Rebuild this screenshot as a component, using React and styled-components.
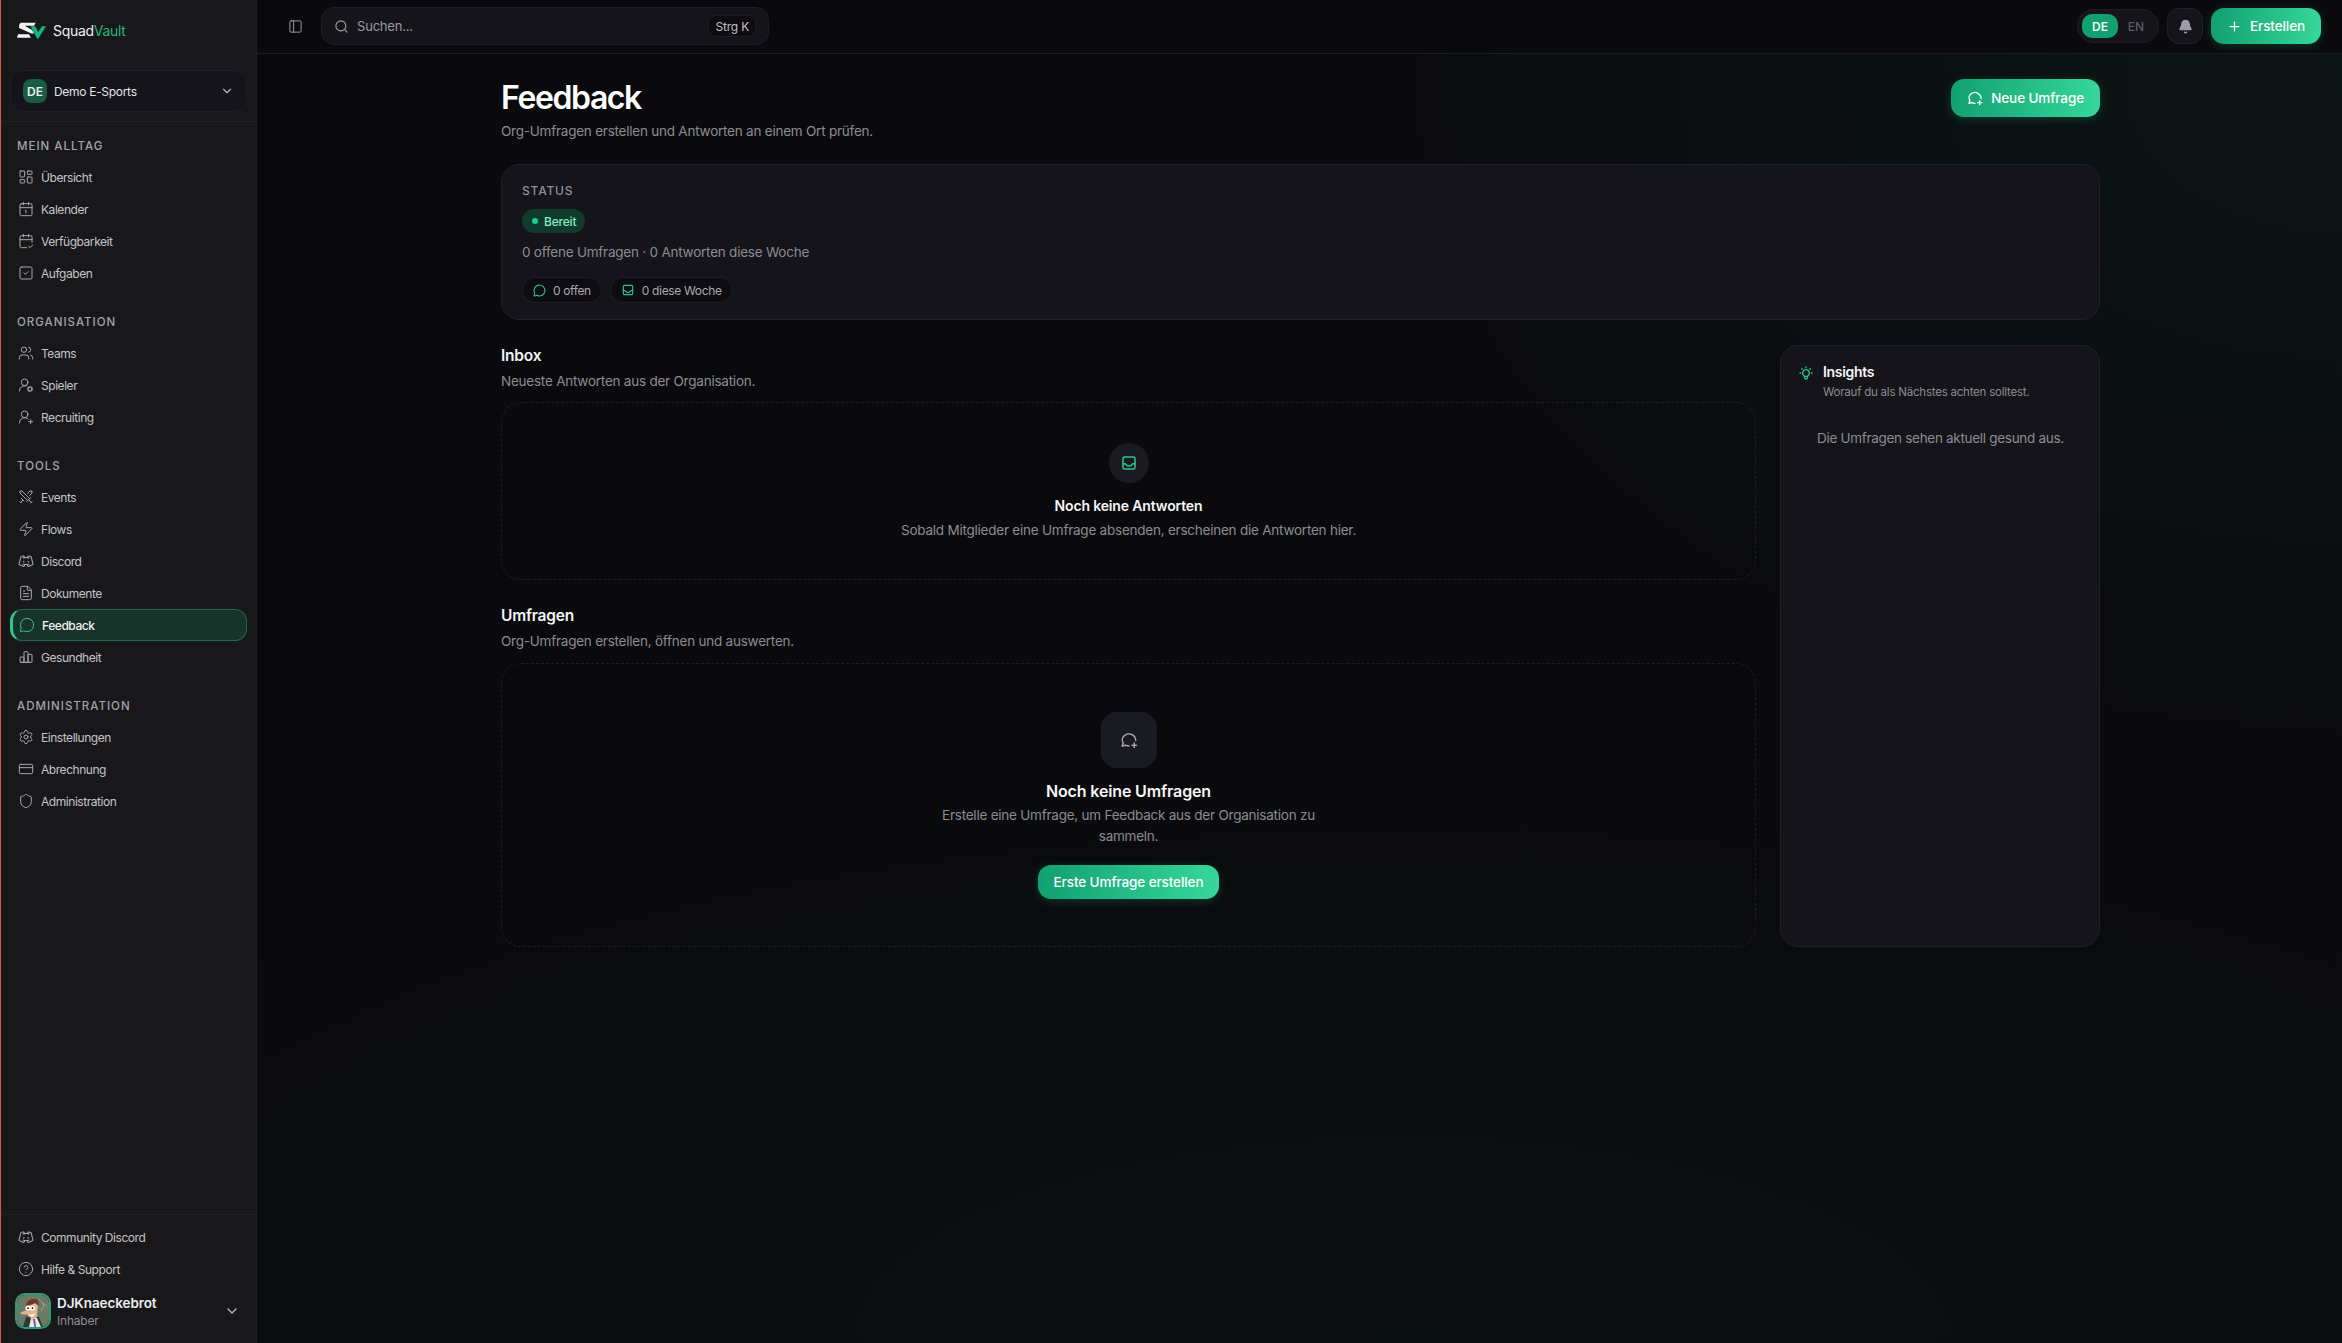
import React from 'react'
import styled, { createGlobalStyle } from 'styled-components'
import {
  LayoutDashboard, Calendar1, CalendarCheck2, SquareCheck, Users, UserRoundCog, UserRoundPlus,
  Swords, Zap, FileText, MessageCircle, Settings, CreditCard, Shield, CircleHelp,
  ChevronDown, PanelLeft, Search, Bell, Plus,
} from 'lucide-react'
import { PiDiscordLogo } from 'react-icons/pi'
import { TbChartBar, TbMessageCirclePlus, TbInbox, TbBulb } from 'react-icons/tb'

const GlobalStyle = createGlobalStyle`
  html, body { margin: 0; padding: 0; background: #0a0a0d; }
  * { box-sizing: border-box; }
  body { font-family: Inter, "Noto Sans", sans-serif; color: #fff; }
`

const Shell = styled.div`
  display: flex;
  height: 1343px;
  overflow: hidden;
`

const Sidebar = styled.aside`
  width: 257px;
  flex: none;
  display: flex;
  flex-direction: column;
  background: #18181a;
  border-left: 1px solid #e0533c;
  border-right: 1px solid #1e1e28;
`

const Brand = styled.div`
  height: 61px;
  display: flex;
  align-items: center;
  gap: 7px;
  padding: 0 0 1px 16px;
`

const BrandName = styled.span`
  font-size: 14px;
  letter-spacing: -0.3px;
  color: #eeeeee;
  em { font-style: normal; color: #22b582; }
`

const OrgWrap = styled.div`
  padding: 9px;
  border-bottom: 1px solid #1f1f29;
`

const OrgSelect = styled.div`
  height: 42px;
  display: flex;
  align-items: center;
  gap: 7px;
  padding: 0 12px;
  background: #14141a;
  border: 1px solid #1e1e28;
  border-radius: 13px;
  color: #e4e4e6;
  svg { margin-left: auto; color: #b8b8bc; }
`

const OrgBadge = styled.div`
  width: 24px;
  height: 24px;
  border-radius: 8px;
  background: #1a5b45;
  display: flex;
  align-items: center;
  justify-content: center;
  font-size: 12px;
  font-weight: 600;
  color: #e8f5ef;
`

const OrgName = styled.span`
  font-size: 12px;
  letter-spacing: -0.3px;
`

const Nav = styled.nav`
  flex: 1;
  display: flex;
  flex-direction: column;
  gap: 25px;
  padding: 16px 9px 0;
`

const NavTitle = styled.div`
  height: 16px;
  line-height: 16px;
  margin-bottom: 7px;
  padding-left: 7px;
  font-size: 11.5px;
  font-weight: 500;
  letter-spacing: 1px;
  color: #a3a3a8;
`

const NavRow = styled.div`
  height: 32px;
  display: flex;
  align-items: center;
  gap: 7px;
  padding-left: ${({ $active }) => ($active ? '6px' : '7px')};
  font-size: 12px;
  letter-spacing: -0.45px;
  border-radius: 12px;
  color: ${({ $active }) => ($active ? '#f2f2f2' : '#c4c4c6')};
  background: ${({ $active }) => ($active ? '#17332a' : 'transparent')};
  border: ${({ $active }) => ($active ? '1px solid #1f6b50' : '1px solid transparent')};
  border-left: ${({ $active }) => ($active ? '3px solid #2fc690' : '1px solid transparent')};
  font-weight: ${({ $active }) => ($active ? 500 : 400)};
  svg { flex: none; color: ${({ $active }) => ($active ? '#2fc690' : '#a9a9ad')}; }
`

const SideFooter = styled.div`
  border-top: 1px solid #1f1f29;
  padding: 6px 9px 14px;
`

const Profile = styled.div`
  margin-top: 8px;
  display: flex;
  align-items: center;
  padding: 0 7px 0 5px;
  gap: 6px;
  > svg:last-child { margin-left: auto; color: #b8b8bc; }
`

const ProfileText = styled.div`
  display: flex;
  flex-direction: column;
  gap: 1px;
`

const ProfileName = styled.span`
  font-size: 13.5px;
  line-height: 17px;
  font-weight: 600;
  letter-spacing: -0.1px;
  color: #ececee;
`

const ProfileRole = styled.span`
  font-size: 12px;
  line-height: 15px;
  letter-spacing: -0.2px;
  color: #8d8d92;
`

const AvatarFrame = styled.svg`
  width: 36px;
  height: 36px;
  border-radius: 10px;
  border: 2px solid #2a9d75;
  flex: none;
`

const Main = styled.div`
  flex: 1;
  min-width: 0;
  display: flex;
  flex-direction: column;
  background:
    radial-gradient(ellipse 1000px 700px at 100% 6%, rgba(20, 130, 90, 0.09), transparent 100%),
    radial-gradient(ellipse 1600px 600px at 55% 100%, rgba(20, 120, 90, 0.05), transparent 100%),
    #0a0a0d;
`

const Topbar = styled.header`
  height: 54px;
  flex: none;
  display: flex;
  align-items: center;
  padding: 0 21px 1px 31px;
  background: #0a0a0d;
  border-bottom: 1px solid #1b1c22;
  > svg { color: #a4a4a8; }
`

const SearchBox = styled.div`
  width: 448px;
  height: 38px;
  margin-left: 18px;
  display: flex;
  align-items: center;
  padding: 0 12px;
  gap: 8px;
  background: #14141a;
  border: 1px solid #1e1e27;
  border-radius: 13px;
  font-size: 13px;
  letter-spacing: -0.2px;
  color: #9a9a9e;
  svg { color: #a4a4a8; }
`

const Kbd = styled.kbd`
  margin-left: auto;
  height: 22px;
  padding: 0 6px;
  display: flex;
  align-items: center;
  font-family: inherit;
  font-size: 12px;
  letter-spacing: -0.2px;
  color: #c0c0c2;
  background: #0c0c10;
  border: 1px solid #1c1c24;
  border-radius: 8px;
`

const TopRight = styled.div`
  margin-left: auto;
  display: flex;
  align-items: center;
  gap: 8px;
`

const LangToggle = styled.div`
  width: 82px;
  height: 34px;
  padding: 0 4px;
  display: flex;
  align-items: center;
  background: #14141a;
  border: 1px solid #1e1e27;
  border-radius: 17px;
`

const LangOption = styled.span`
  width: 36px;
  height: 24px;
  display: flex;
  align-items: center;
  justify-content: center;
  border-radius: 10px;
  font-size: 12px;
  font-weight: ${({ $on }) => ($on ? 600 : 500)};
  color: ${({ $on }) => ($on ? '#f2fbf7' : '#5c5c63')};
  background: ${({ $on }) => ($on ? '#12a070' : 'transparent')};
`

const BellButton = styled.div`
  width: 36px;
  height: 36px;
  display: flex;
  align-items: center;
  justify-content: center;
  background: #14141a;
  border: 1px solid #20202a;
  border-radius: 12px;
  color: #9c9cab;
`

const PrimaryButton = styled.button`
  height: ${({ $h }) => $h}px;
  margin-top: ${({ $mt }) => $mt || 0}px;
  padding: 0 ${({ $pad }) => $pad}px;
  display: inline-flex;
  align-items: center;
  gap: 8px;
  border: none;
  border-radius: 13px;
  font-family: inherit;
  font-size: 13.5px;
  font-weight: 500;
  letter-spacing: -0.1px;
  color: #fff;
  background: linear-gradient(90deg, #12a070 0%, #36d79c 100%);
  box-shadow: 0 2px 10px rgba(32, 190, 130, 0.25);
`

const Content = styled.main`
  width: 1599px;
  margin-left: 244px;
  display: flex;
  flex-direction: column;
`

const PageHead = styled.div`
  display: flex;
  justify-content: space-between;
  align-items: flex-start;
  padding-top: 25px;
  height: 110px;
`

const PageTitle = styled.h1`
  margin: 0;
  font-size: 32px;
  line-height: 38px;
  font-weight: 600;
  letter-spacing: -1.4px;
  color: #fff;
`

const Muted = styled.p`
  margin: ${({ $mt }) => $mt || 0}px 0 0;
  font-size: ${({ $size }) => $size || 13.5}px;
  line-height: ${({ $lh }) => $lh || 20}px;
  letter-spacing: ${({ $ls }) => $ls || -0.23}px;
  color: #8c8c90;
`

const StatusCard = styled.section`
  height: 156px;
  padding: 18px 20px;
  background: #14141a;
  border: 1px solid #20202a;
  border-radius: 18px;
`

const Eyebrow = styled.div`
  font-size: 12px;
  line-height: 16px;
  font-weight: 500;
  letter-spacing: 0.8px;
  color: #909095;
`

const ReadyBadge = styled.span`
  margin-top: 10px;
  height: 24px;
  width: 63px;
  display: flex;
  align-items: center;
  gap: 6px;
  padding-left: 10px;
  border-radius: 12px;
  background: #0f3a2c;
  font-size: 12px;
  font-weight: 500;
  letter-spacing: -0.2px;
  color: #86efc4;
`

const Dot = styled.i`
  width: 6px;
  height: 6px;
  border-radius: 50%;
  background: #12d190;
`

const PillRow = styled.div`
  margin-top: 15px;
  display: flex;
  gap: 8px;
`

const Pill = styled.span`
  height: 26px;
  padding: 0 10px;
  display: inline-flex;
  align-items: center;
  gap: 7px;
  background: #0c0c11;
  border: 1px solid #1d1d27;
  border-radius: 13px;
  font-size: 12px;
  letter-spacing: -0.35px;
  color: #a9a9ae;
  svg { color: #2cc48d; }
`

const Columns = styled.div`
  margin-top: 25px;
  display: grid;
  grid-template-columns: 1fr 320px;
  gap: 24px;
`

const Stack = styled.div`
  display: flex;
  flex-direction: column;
`

const SectionTitle = styled.h2`
  margin: ${({ $mt }) => $mt || 0}px 0 0;
  font-size: 15.5px;
  line-height: 22px;
  font-weight: 600;
  letter-spacing: -0.2px;
  color: #f4f4f5;
`

const EmptyBox = styled.div`
  margin-top: ${({ $gap }) => $gap}px;
  height: ${({ $h }) => $h}px;
  padding-top: ${({ $top }) => $top}px;
  display: flex;
  flex-direction: column;
  align-items: center;
  border: 1px dashed #1e1e25;
  border-radius: 20px;
  text-align: center;
`

const RoundIcon = styled.div`
  width: 40px;
  height: 40px;
  border-radius: 50%;
  display: flex;
  align-items: center;
  justify-content: center;
  background: #1a1a21;
  color: #2cc48d;
`

const SquareIcon = styled.div`
  width: 56px;
  height: 56px;
  border-radius: 16px;
  display: flex;
  align-items: center;
  justify-content: center;
  background: #1a1a22;
  color: #a8a8ac;
`

const EmptyTitle = styled.div`
  margin-top: ${({ $mt }) => $mt}px;
  font-size: ${({ $size }) => $size}px;
  line-height: 20px;
  font-weight: 600;
  letter-spacing: -0.15px;
  color: #f6f6f7;
`

const EmptyText = styled(Muted)`
  max-width: ${({ $max }) => $max}px;
`

const InsightsCard = styled.aside`
  padding: 16px 17px;
  background: #14141a;
  border: 1px solid #20202a;
  border-radius: 18px;
`

const InsightsHead = styled.div`
  display: flex;
  gap: 9px;
  svg { color: #2cc48d; flex: none; margin-top: 3px; }
`

const InsightsTitle = styled.div`
  font-size: 14px;
  line-height: 20px;
  font-weight: 600;
  letter-spacing: -0.3px;
  color: #f6f6f7;
`

const InsightsText = styled(Muted)`
  margin-left: 19px;
`

const navGroups = [
  { title: 'MEIN ALLTAG', items: [
    [LayoutDashboard, 'Übersicht'],
    [Calendar1, 'Kalender'],
    [CalendarCheck2, 'Verfügbarkeit'],
    [SquareCheck, 'Aufgaben'],
  ] },
  { title: 'ORGANISATION', items: [
    [Users, 'Teams'],
    [UserRoundCog, 'Spieler'],
    [UserRoundPlus, 'Recruiting'],
  ] },
  { title: 'TOOLS', items: [
    [Swords, 'Events'],
    [Zap, 'Flows'],
    [PiDiscordLogo, 'Discord'],
    [FileText, 'Dokumente'],
    [MessageCircle, 'Feedback', true],
    [TbChartBar, 'Gesundheit'],
  ] },
  { title: 'ADMINISTRATION', items: [
    [Settings, 'Einstellungen'],
    [CreditCard, 'Abrechnung'],
    [Shield, 'Administration'],
  ] },
]

const Logo = () => (
  <svg width="29" height="17" viewBox="0 0 28 16">
    <path fill="#f2f2f2" d="M3.5 0.5H18L16.5 3.5H7.5L14.5 7.5L16.5 11H14L2 5.5V3Z" />
    <path fill="#f2f2f2" d="M1 11.5H11.5L13.5 15H0Z" />
    <path fill="#17b27f" d="M13 4H17.5L20.5 9.5L24 4H28L20.5 16H19.5Z" />
  </svg>
)

const Avatar = () => (
  <AvatarFrame viewBox="0 0 32 32">
    <rect width="32" height="32" fill="#6b7a66" />
    <path d="M22 4l5 6-3 6M26 8l4 3" stroke="#a4b09c" strokeWidth="0.8" fill="none" />
    <path d="M6 32l3-10h13l4 10z" fill="#2b3a33" />
    <path d="M12 32l2-9h6l4 9z" fill="#e8e8e2" />
    <path d="M16 24l1.5 8h1.5l-1-8z" fill="#6b4aa0" />
    <path d="M10 9c3-4 9-3 11 1l-1 12c-3 3-7 2-9-2z" fill="#e2b48c" />
    <path d="M3 18c3-2 6-3 10-3l1 3c-3 2-8 2-11 0z" fill="#e2b48c" />
    <path d="M9 11c0-5 6-9 12-6l1 6-4-3c-3 2-6 2-9 3z" fill="#6d3a20" />
    <circle cx="11" cy="13" r="2.6" fill="#fff" />
    <circle cx="15.5" cy="13" r="2.6" fill="#fff" />
    <circle cx="11" cy="13.2" r="0.9" fill="#111" />
    <circle cx="15.5" cy="13.2" r="0.9" fill="#111" />
    <path d="M10 19c3 1 6 1 8-1l-1 3c-2 1-5 0-7-2z" fill="#fff" />
  </AvatarFrame>
)

const MenuRow = ({ icon: Icon, label, active }) => (
  <NavRow $active={active}>
    <Icon size={16} strokeWidth={1.5} />
    <span>{label}</span>
  </NavRow>
)

export default function App() {
  return (
    <Shell>
      <GlobalStyle />
      <Sidebar>
        <Brand>
          <Logo />
          <BrandName>Squad<em>Vault</em></BrandName>
        </Brand>
        <OrgWrap>
          <OrgSelect>
            <OrgBadge>DE</OrgBadge>
            <OrgName>Demo E-Sports</OrgName>
            <ChevronDown size={14} />
          </OrgSelect>
        </OrgWrap>
        <Nav>
          {navGroups.map((group) => (
            <div key={group.title}>
              <NavTitle>{group.title}</NavTitle>
              {group.items.map(([icon, label, active]) => (
                <MenuRow key={label} icon={icon} label={label} active={active} />
              ))}
            </div>
          ))}
        </Nav>
        <SideFooter>
          <MenuRow icon={PiDiscordLogo} label="Community Discord" />
          <MenuRow icon={CircleHelp} label="Hilfe & Support" />
          <Profile>
            <Avatar />
            <ProfileText>
              <ProfileName>DJKnaeckebrot</ProfileName>
              <ProfileRole>Inhaber</ProfileRole>
            </ProfileText>
            <ChevronDown size={16} />
          </Profile>
        </SideFooter>
      </Sidebar>

      <Main>
        <Topbar>
          <PanelLeft size={15} strokeWidth={1.5} />
          <SearchBox>
            <Search size={15} strokeWidth={1.75} />
            <span>Suchen...</span>
            <Kbd>Strg K</Kbd>
          </SearchBox>
          <TopRight>
            <LangToggle>
              <LangOption $on>DE</LangOption>
              <LangOption>EN</LangOption>
            </LangToggle>
            <BellButton><Bell size={15} fill="currentColor" /></BellButton>
            <PrimaryButton $h={36} $pad={16}><Plus size={15} />Erstellen</PrimaryButton>
          </TopRight>
        </Topbar>

        <Content>
          <PageHead>
            <div>
              <PageTitle>Feedback</PageTitle>
              <Muted $mt={4}>Org-Umfragen erstellen und Antworten an einem Ort prüfen.</Muted>
            </div>
            <PrimaryButton $h={38} $pad={16}><TbMessageCirclePlus size={16} />Neue Umfrage</PrimaryButton>
          </PageHead>

          <StatusCard>
            <Eyebrow>STATUS</Eyebrow>
            <ReadyBadge><Dot />Bereit</ReadyBadge>
            <Muted $mt={9}>0 offene Umfragen · 0 Antworten diese Woche</Muted>
            <PillRow>
              <Pill><MessageCircle size={13} />0 offen</Pill>
              <Pill><TbInbox size={14} />0 diese Woche</Pill>
            </PillRow>
          </StatusCard>

          <Columns>
            <Stack>
              <SectionTitle>Inbox</SectionTitle>
              <Muted $mt={4}>Neueste Antworten aus der Organisation.</Muted>
              <EmptyBox $gap={11} $h={178} $top={40}>
                <RoundIcon><TbInbox size={18} /></RoundIcon>
                <EmptyTitle $mt={13} $size={14}>Noch keine Antworten</EmptyTitle>
                <EmptyText $mt={4} $max={600}>Sobald Mitglieder eine Umfrage absenden, erscheinen die Antworten hier.</EmptyText>
              </EmptyBox>
              <SectionTitle $mt={25}>Umfragen</SectionTitle>
              <Muted $mt={4}>Org-Umfragen erstellen, öffnen und auswerten.</Muted>
              <EmptyBox $gap={12} $h={284} $top={48}>
                <SquareIcon><TbMessageCirclePlus size={18} /></SquareIcon>
                <EmptyTitle $mt={13} $size={16}>Noch keine Umfragen</EmptyTitle>
                <EmptyText $mt={4} $lh={21} $max={400}>Erstelle eine Umfrage, um Feedback aus der Organisation zu sammeln.</EmptyText>
                <PrimaryButton $h={34} $pad={16} $mt={18}>Erste Umfrage erstellen</PrimaryButton>
              </EmptyBox>
            </Stack>
            <InsightsCard>
              <InsightsHead>
                <TbBulb size={16} />
                <div>
                  <InsightsTitle>Insights</InsightsTitle>
                  <Muted $mt={2} $size={11.5} $lh={16} $ls={-0.22}>Worauf du als Nächstes achten solltest.</Muted>
                </div>
              </InsightsHead>
              <InsightsText $mt={28} $ls={-0.3}>Die Umfragen sehen aktuell gesund aus.</InsightsText>
            </InsightsCard>
          </Columns>
        </Content>
      </Main>
    </Shell>
  )
}
